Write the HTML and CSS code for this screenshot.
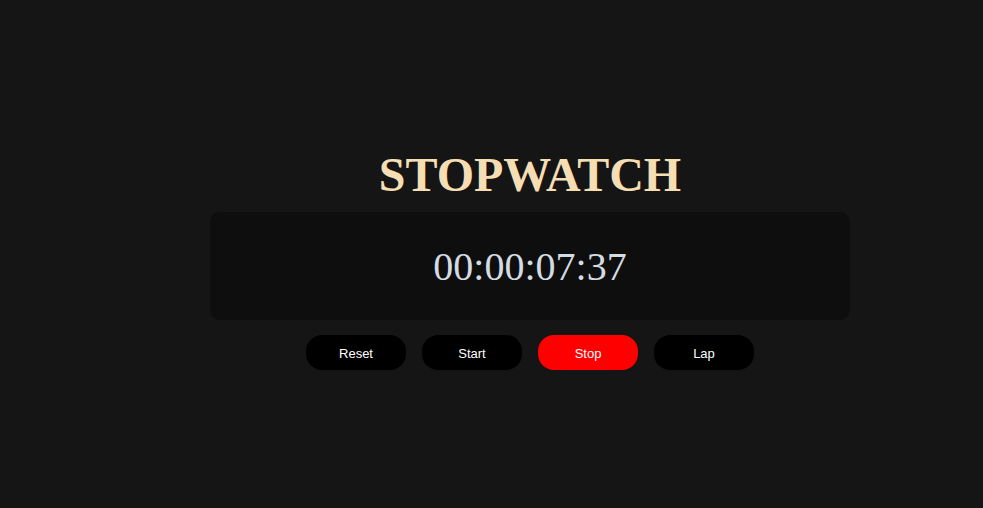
FILE: index.html
```html
<!DOCTYPE html>
<html>
<head>
<meta charset="utf-8">
<link rel="stylesheet" href="styles.css">
</head>
<body>
<div class="wrap">
  <h1 class="title">STOPWATCH</h1>
  <div class="display">00:00:07:37</div>
  <div class="buttons">
    <button class="btn">Reset</button>
    <button class="btn">Start</button>
    <button class="btn btn-stop">Stop</button>
    <button class="btn">Lap</button>
  </div>
</div>
</body>
</html>
```
FILE: styles.css
```css
html, body {
  margin: 0;
  padding: 0;
  background: #151515;
  height: 100%;
}
.wrap {
  width: 640px;
  margin-left: 210px;
  padding-top: 148px;
  display: flex;
  flex-direction: column;
  align-items: center;
}
.title {
  margin: 0 0 11px;
  font-family: "Liberation Serif", "Times New Roman", serif;
  font-weight: bold;
  font-size: 48px;
  line-height: 53px;
  color: #f5deb3;
}
.display {
  width: 640px;
  height: 108px;
  border-radius: 10px;
  background: #0e0e0e;
  display: flex;
  align-items: center;
  justify-content: center;
  font-family: "Liberation Serif", "Times New Roman", serif;
  font-size: 40px;
  color: #d3dce3;
}
.buttons {
  margin-top: 15px;
  display: flex;
  gap: 16px;
}
.btn {
  width: 100px;
  height: 35px;
  border: none;
  border-radius: 16px;
  background: #000;
  color: #fff;
  font-family: "Liberation Sans", Arial, sans-serif;
  font-size: 13px;
  padding: 2px 0 0;
}
.btn-stop {
  background: #ff0000;
}
```
